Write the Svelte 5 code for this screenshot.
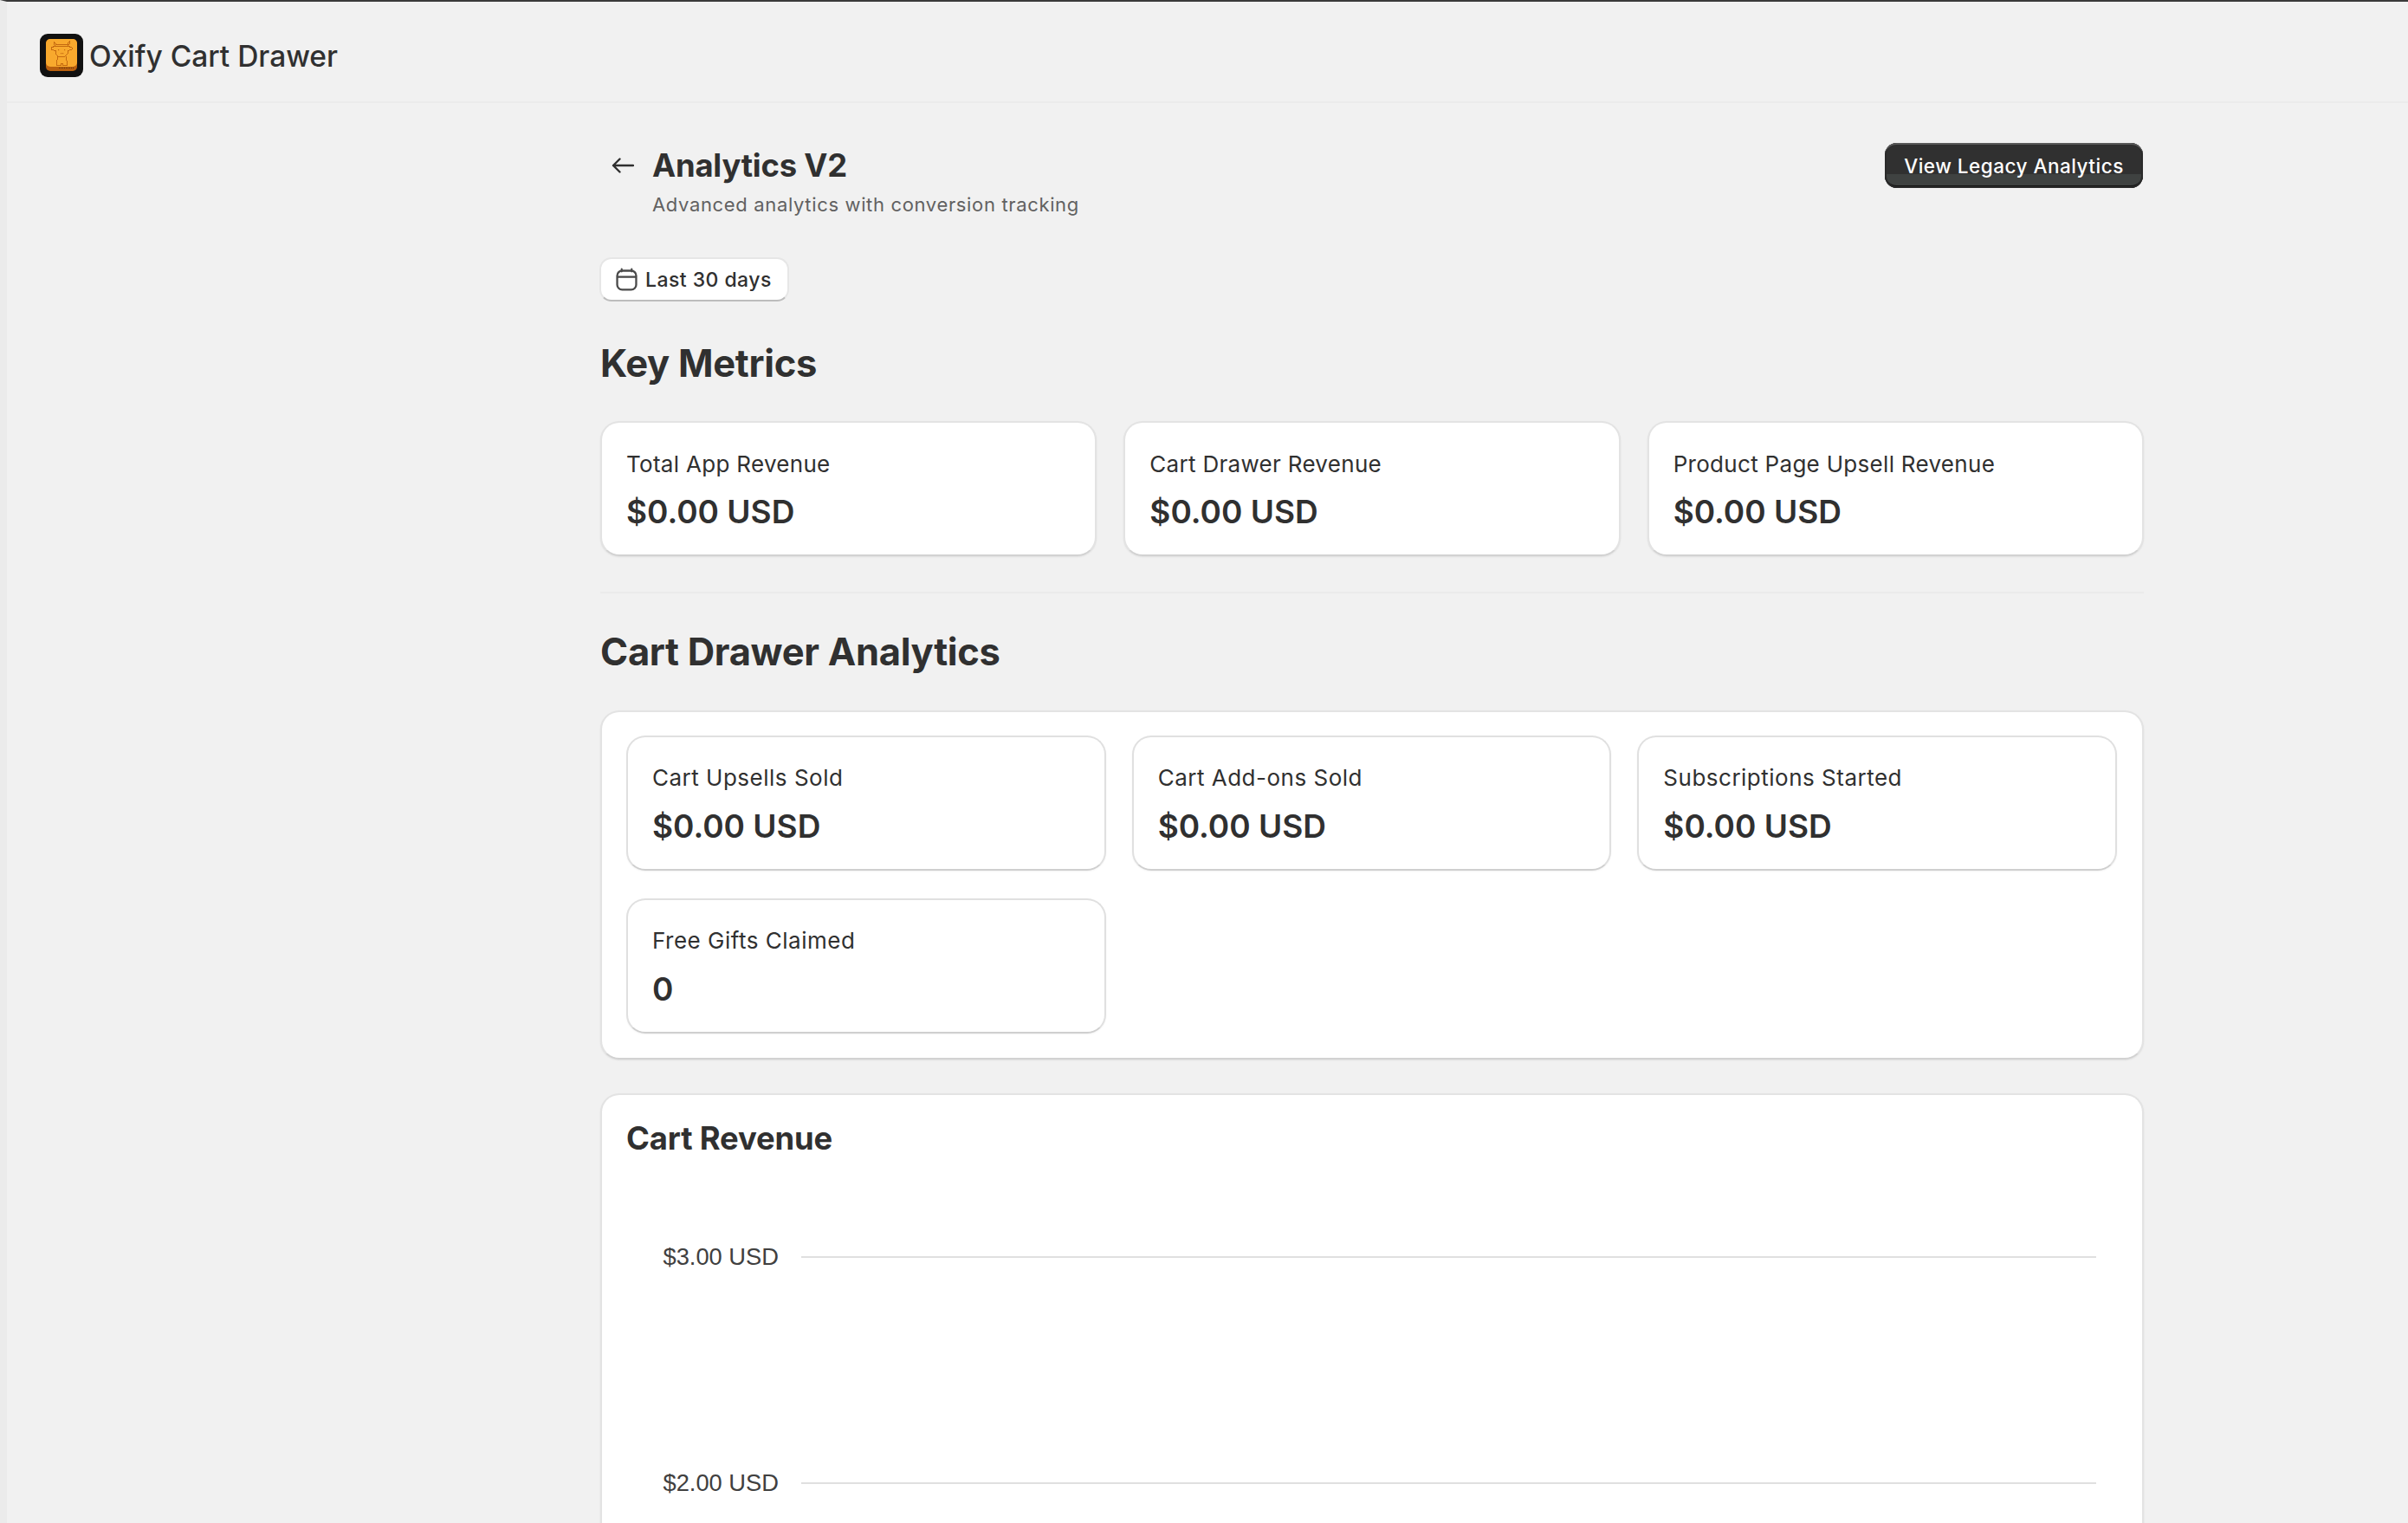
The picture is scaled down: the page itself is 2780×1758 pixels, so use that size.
<script lang="ts">
	const keyMetrics = [
		{ label: "Total App Revenue", value: "$0.00 USD" },
		{ label: "Cart Drawer Revenue", value: "$0.00 USD" },
		{ label: "Product Page Upsell Revenue", value: "$0.00 USD" },
	];

	const drawerMetrics = [
		{ label: "Cart Upsells Sold", value: "$0.00 USD" },
		{ label: "Cart Add-ons Sold", value: "$0.00 USD" },
		{ label: "Subscriptions Started", value: "$0.00 USD" },
		{ label: "Free Gifts Claimed", value: "0" },
	];

	// only the two ticks that fit above the fold
	const ticks = ["$3.00 USD", "$2.00 USD"];
</script>

{#snippet metric(item: { label: string; value: string }, inner: boolean)}
	<div class="metric" class:inner>
		<div class="metric-label">{item.label}</div>
		<div class="metric-value">{item.value}</div>
	</div>
{/snippet}

<div class="frame">
	<header class="topbar">
		<svg class="logo" viewBox="0 0 50 50" aria-hidden="true">
			<rect width="50" height="50" rx="9" fill="#111" />
			<rect x="7" y="6" width="36" height="37" rx="5" fill="#b9600f" />
			<rect x="7" y="6" width="36" height="32" rx="5" fill="#f8a92d" />
			<g fill="none" stroke="#c56a10" stroke-width="1" shape-rendering="crispEdges">
				<path d="M16 9v3l2 2h14l2-2V9l-2 2v1H18v-1z" />
				<path d="M18 14l-5 2v2l3 1h2v4l3 3h8l3-3v-4h2l3-1v-2l-5-2" />
				<path d="M20 26v4l-1 1v5h5v-2h2v2h5v-5l-1-1v-4" />
			</g>
			<g fill="#c56a10">
				<rect x="21" y="18" width="1.2" height="1.2" />
				<rect x="28" y="18" width="1.2" height="1.2" />
				<rect x="24" y="22" width="1.2" height="1.2" />
				<rect x="26" y="22" width="1.2" height="1.2" />
			</g>
			<path d="M22 39.5h18" stroke="#5a3208" stroke-width="1" stroke-dasharray="1 1" />
		</svg>
		<span class="app-name">Oxify Cart Drawer</span>
	</header>

	<main class="page">
		<div class="page-head">
			<div class="head-left">
				<svg class="back" viewBox="0 0 26 20" aria-hidden="true">
					<path d="M25 10H2M9.5 2.5 2 10l7.5 7.5" fill="none" stroke="#303030" stroke-width="2.4" stroke-linecap="round" stroke-linejoin="round" />
				</svg>
				<div>
					<h1>Analytics V2</h1>
					<p class="subtitle">Advanced analytics with conversion tracking</p>
				</div>
			</div>
			<button class="primary" type="button">View Legacy Analytics</button>
		</div>

		<button class="date" type="button">
			<svg viewBox="0 0 26 28" aria-hidden="true">
				<path d="M7 1.5v3M19 1.5v3" stroke="#4a4a4a" stroke-width="2.2" stroke-linecap="round" />
				<rect x="1.6" y="3.6" width="22.8" height="22.8" rx="6" fill="none" stroke="#4a4a4a" stroke-width="2.4" />
				<path d="M2 11h22" stroke="#4a4a4a" stroke-width="2.4" />
			</svg>
			Last 30 days
		</button>

		<h2 class="section-title first">Key Metrics</h2>
		<div class="grid key-grid">
			{#each keyMetrics as item}
				{@render metric(item, false)}
			{/each}
		</div>

		<hr class="divider" />

		<h2 class="section-title">Cart Drawer Analytics</h2>
		<section class="card drawer-card">
			<div class="grid drawer-grid">
				{#each drawerMetrics as item}
					{@render metric(item, true)}
				{/each}
			</div>
		</section>

		<section class="card chart-card">
			<h3>Cart Revenue</h3>
			<div class="chart">
				{#each ticks as tick}
					<div class="tick">
						<span class="tick-label">{tick}</span>
						<span class="tick-line"></span>
					</div>
				{/each}
			</div>
		</section>
	</main>
</div>

<style>
	:global(body) {
		background: #f1f1f1;
		overflow: hidden;
	}

	.frame {
		height: 1758px;
		overflow: hidden;
		box-sizing: border-box;
		border-top: 2px solid #3a3a3a;
		border-left: 8px solid #ebebeb;
		background: #f1f1f1;
		color: #303030;
		font-family: Inter, "Liberation Sans", sans-serif;
	}

	.topbar {
		height: 117px;
		box-sizing: border-box;
		border-bottom: 2px solid #ebebeb;
		padding: 9px 0 0 38px;
		display: flex;
		align-items: center;
		gap: 7px;
	}

	.logo {
		width: 50px;
		height: 50px;
		flex: none;
	}

	.app-name {
		margin-top: 3px;
		font-size: 33.5px;
		font-weight: 550;
		line-height: 1;
	}

	.page {
		width: 1782px;
		margin-left: 685px;
	}

	.page-head {
		display: flex;
		justify-content: space-between;
		align-items: flex-start;
		padding-top: 46px;
	}

	.head-left {
		display: flex;
		align-items: flex-start;
		gap: 21px;
		padding-left: 13px;
	}

	.back {
		width: 26px;
		height: 20px;
		margin-top: 16px;
	}

	h1,
	h2,
	h3,
	p {
		margin: 0;
	}

	h1 {
		font-size: 36.4px;
		font-weight: 700;
		letter-spacing: -0.2px;
		line-height: 52px;
	}

	.subtitle {
		margin-top: 4px;
		font-size: 22px;
		line-height: 30px;
		letter-spacing: 0.65px;
		color: #616161;
	}

	button {
		font-family: inherit;
	}

	.primary {
		width: 298px;
		height: 52px;
		margin-right: 1px;
		padding: 0;
		border: none;
		border-radius: 14px;
		color: #fff;
		font-size: 22.5px;
		font-weight: 500;
		letter-spacing: 0.5px;
		background: linear-gradient(#303030 70%, #3f4241 70%);
		box-shadow:
			inset 0 3px 0 -1px #5a5a5a,
			inset 0 0 0 2px #2a2a2a,
			inset 0 -3px 0 #121212;
	}

	.date {
		display: flex;
		align-items: center;
		gap: 9px;
		width: 219px;
		height: 51px;
		margin-top: 46px;
		margin-left: -1px;
		padding: 0 0 0 17px;
		box-sizing: border-box;
		border: 2px solid #e6e6e6;
		border-bottom-color: #bdbdbd;
		border-radius: 14px;
		background: #fff;
		color: #303030;
		font-size: 23px;
		font-weight: 500;
		letter-spacing: 0.45px;
	}

	.date svg {
		width: 25px;
		height: 27px;
	}

	.section-title {
		font-size: 43.5px;
		font-weight: 700;
		letter-spacing: -0.3px;
		line-height: 60px;
	}

	.section-title.first {
		margin-top: 41px;
	}

	.grid {
		display: grid;
		grid-template-columns: repeat(3, 1fr);
	}

	.key-grid {
		gap: 31px;
		margin-top: 37px;
	}

	.metric {
		height: 156px;
		box-sizing: border-box;
		padding: 32px 28px 0;
		background: #fff;
		border: 2px solid #e3e3e3;
		border-bottom-color: #d2d2d2;
		border-radius: 22px;
		box-shadow: 0 1px 2px rgba(0, 0, 0, 0.08);
	}

	.metric.inner {
		padding-top: 31px;
		border-color: #e0e0e0;
		border-bottom-color: #cfcfcf;
		box-shadow: 0 1px 2px rgba(0, 0, 0, 0.05);
	}

	.metric-label {
		font-size: 26px;
		line-height: 32px;
		letter-spacing: 0.3px;
	}

	.inner .metric-label {
		letter-spacing: 0.5px;
	}

	.metric-value {
		margin-top: 16px;
		font-size: 37px;
		font-weight: 600;
		line-height: 46px;
	}

	.inner .metric-value {
		margin-top: 17px;
	}

	.divider {
		height: 2px;
		margin: 41px 0 0;
		border: none;
		background: #ebebeb;
	}

	.divider + .section-title {
		margin-top: 37px;
	}

	.card {
		background: #fff;
		border: 2px solid #e3e3e3;
		border-bottom-color: #d2d2d2;
		border-radius: 22px;
		box-sizing: border-box;
		box-shadow: 0 1px 2px rgba(0, 0, 0, 0.08);
	}

	.drawer-card {
		height: 403px;
		margin-top: 38px;
		padding: 27px 29px 26px 28px;
	}

	.drawer-grid {
		column-gap: 30px;
		row-gap: 32px;
	}

	.chart-card {
		margin-top: 39px;
		padding: 25px 30px 0 28px;
		height: 1000px;
	}

	h3 {
		font-size: 36.4px;
		font-weight: 700;
		letter-spacing: -0.15px;
		line-height: 50px;
	}

	.chart {
		margin-top: 96px;
		padding: 0 23px 0 42px;
		display: flex;
		flex-direction: column;
		gap: 229px;
	}

	.tick {
		display: flex;
		align-items: center;
		gap: 26px;
		height: 32px;
	}

	.tick-label {
		width: 134px;
		flex: none;
		font-family: "Liberation Sans", sans-serif;
		font-size: 27.3px;
		text-align: right;
		color: #404040;
	}

	.tick-line {
		flex: 1;
		height: 2px;
		background: #e0e0e0;
	}
</style>
